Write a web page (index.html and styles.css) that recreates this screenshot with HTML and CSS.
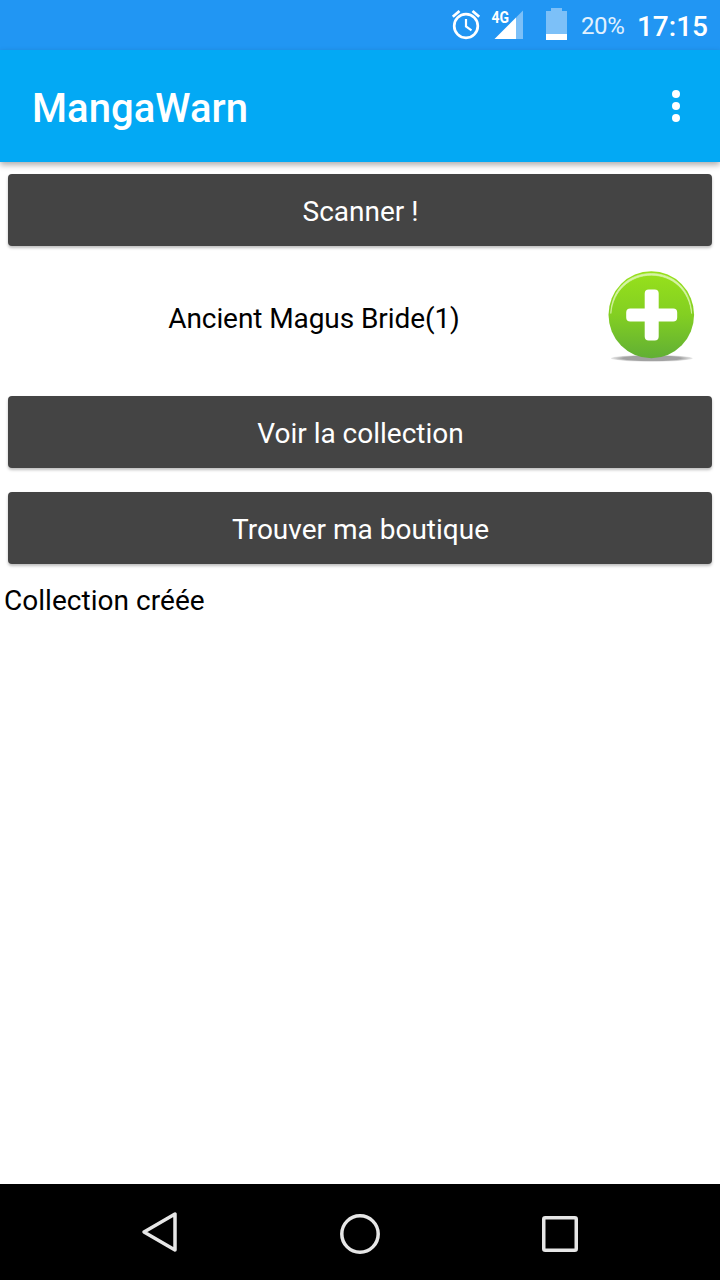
FILE: index.html
```html
<!DOCTYPE html>
<html lang="fr">
<head>
  <meta charset="utf-8">
  <title>MangaWarn</title>
  <link rel="stylesheet" href="styles.css">
</head>
<body>
  <div class="screen">
    <div class="status-bar">
      <svg class="alarm" width="30" height="32" viewBox="0 0 30 32" fill="none" stroke="#fff">
        <circle cx="15" cy="18" r="11.800" stroke-width="2.700"/>
        <path d="M15 11v7.500l5.500 3.800" stroke-width="2.200"/>
        <path d="M1.800 8.700 8.500 3M28.200 8.700 21.500 3" stroke-width="2.800"/>
      </svg>
      <svg class="signal" width="33" height="32" viewBox="0 0 33 32">
        <path d="M25 9.500 32 2.500V31h-7z" fill="#7cc0f8"/>
        <path d="M3.500 31 25 9.500V31z" fill="#fff"/>
        <path d="M0 0h18.500v15.500H0z" fill="#2196f3"/>
        <text class="network" x="0.500" y="15" textLength="17.500" lengthAdjust="spacingAndGlyphs">4G</text>
      </svg>
      <svg class="battery" width="21" height="32" viewBox="0 0 21 32">
        <path d="M0 3h5V0h11v3h5v23H0z" fill="#7cc0f8"/>
        <path d="M0 26h21v6H0z" fill="#fff"/>
      </svg>
      <span class="percent">20%</span>
      <span class="clock">17:15</span>
    </div>
    <header class="app-bar">
      <h1 class="title">MangaWarn</h1>
      <svg width="8" height="32" viewBox="0 0 8 32" fill="#fff">
        <circle cx="4" cy="4" r="4"/><circle cx="4" cy="16" r="4"/><circle cx="4" cy="28" r="4"/>
      </svg>
    </header>
    <main class="content">
      <button class="button">Scanner !</button>
      <div class="result">
        <span class="manga">Ancient Magus Bride(1)</span>
        <svg class="add" width="88" height="94" viewBox="0 0 88 94">
          <defs>
            <linearGradient id="green" x2="0" y2="1">
              <stop offset="0" stop-color="#98e11b"/>
              <stop offset=".5" stop-color="#83cf22"/>
              <stop offset="1" stop-color="#61af34"/>
            </linearGradient>
            <radialGradient id="shade">
              <stop offset=".7" stop-color="#a2a2a2"/>
              <stop offset="1" stop-color="#aaa" stop-opacity=".25"/>
            </radialGradient>
          </defs>
          <ellipse cx="43.800" cy="88.300" rx="41" ry="3.400" fill="url(#shade)"/>
          <ellipse cx="43.300" cy="44.800" rx="42.800" ry="43.500" fill="url(#green)"/>
          <path d="M2.800 43.500C3.600 19.500 20.500 3.500 43.300 3.500s39.500 16 40.300 40C81.500 20.500 64.500 5.200 43.300 5.200S5 20.500 2.800 43.500z" fill="#d6f4a5" stroke="#d6f4a5" stroke-width=".7"/>
          <path transform="translate(-.300 .600)" d="M41 19h6q4 0 4 4v15h14.500q4 0 4 4v5q0 4-4 4H51v15q0 4-4 4h-6q-4 0-4-4V51H22.500q-4 0-4-4v-5q0-4 4-4H37V23q0-4 4-4z" fill="#fff"/>
        </svg>
      </div>
      <button class="button">Voir la collection</button>
      <button class="button last">Trouver ma boutique</button>
      <p class="message">Collection créée</p>
    </main>
    <nav class="nav-bar">
      <svg class="back" width="40" height="44" viewBox="0 0 40 44" fill="none" stroke="#e6e6e6" stroke-width="3.500" stroke-linejoin="round"><path d="M37 4v36L6 22z"/></svg>
      <svg width="40" height="40" viewBox="0 0 40 40" fill="none" stroke="#e6e6e6" stroke-width="3.500"><circle cx="20" cy="20" r="18.200"/></svg>
      <svg width="36" height="36" viewBox="0 0 36 36" fill="none" stroke="#e6e6e6" stroke-width="3.500"><rect x="1.750" y="1.750" width="32.500" height="32.500" rx="1.500"/></svg>
    </nav>
  </div>
</body>
</html>
```
FILE: styles.css
```css
body {
  margin: 0;
  font-family: Roboto, "Noto Sans", sans-serif;
  background: #fff;
}

.screen {
  display: flex;
  flex-direction: column;
  height: 1280px;
  overflow: hidden;
}

.status-bar {
  display: flex;
  box-sizing: border-box;
  height: 50px;
  padding: 8px 12px 0 451px;
  background: #2196f3;
  color: #fff;
}

.status-bar svg,
.status-bar span {
  flex: none;
}

.signal {
  margin-left: 10px;
}

.network {
  font-size: 17px;
  font-weight: 700;
  fill: #fff;
}

.battery {
  margin-left: 22px;
}

.percent {
  margin-left: 14px;
  font-size: 24px;
  line-height: 36px;
  letter-spacing: -.4px;
  color: #e2f1fe;
}

.clock {
  margin-left: auto;
  font-size: 28px;
  line-height: 38px;
  font-weight: 500;
}

.app-bar {
  display: flex;
  align-items: center;
  justify-content: space-between;
  box-sizing: border-box;
  height: 112px;
  padding: 0 40px 0 32px;
  background: #03a9f4;
  color: #fff;
  box-shadow: 0 3px 6px rgba(0, 0, 0, .32);
}

.title {
  margin: 6px 0 0;
  font-size: 40px;
  line-height: 48px;
  font-weight: 500;
  letter-spacing: .05px;
}

.content {
  display: flex;
  flex: 1;
  flex-direction: column;
  padding: 12px 8px 0;
}

.button {
  height: 72px;
  padding: 3px 0 0 1px;
  border: 0;
  border-radius: 4px;
  background: #444;
  color: #fff;
  font: 400 28px/33px Roboto, "Noto Sans", sans-serif;
  box-shadow: 0 2px 3px rgba(0, 0, 0, .26);
}

.last {
  margin-top: 24px;
}

.result {
  display: flex;
  align-items: center;
  height: 150px;
  padding-right: 16px;
}

.manga {
  flex: 1;
  padding-bottom: 6px;
  padding-left: 12px;
  font-size: 28px;
  line-height: 33px;
  letter-spacing: -.08px;
  text-align: center;
}

.add {
  margin-top: -8px;
}

.message {
  margin: 20px 0 0 -4px;
  font-size: 28px;
  line-height: 33px;
  letter-spacing: .04px;
}

.nav-bar {
  display: flex;
  align-items: center;
  justify-content: space-between;
  box-sizing: border-box;
  height: 96px;
  padding: 4px 142px 0 138px;
  background: #000;
}

.back {
  margin-bottom: 4px;
}
```
